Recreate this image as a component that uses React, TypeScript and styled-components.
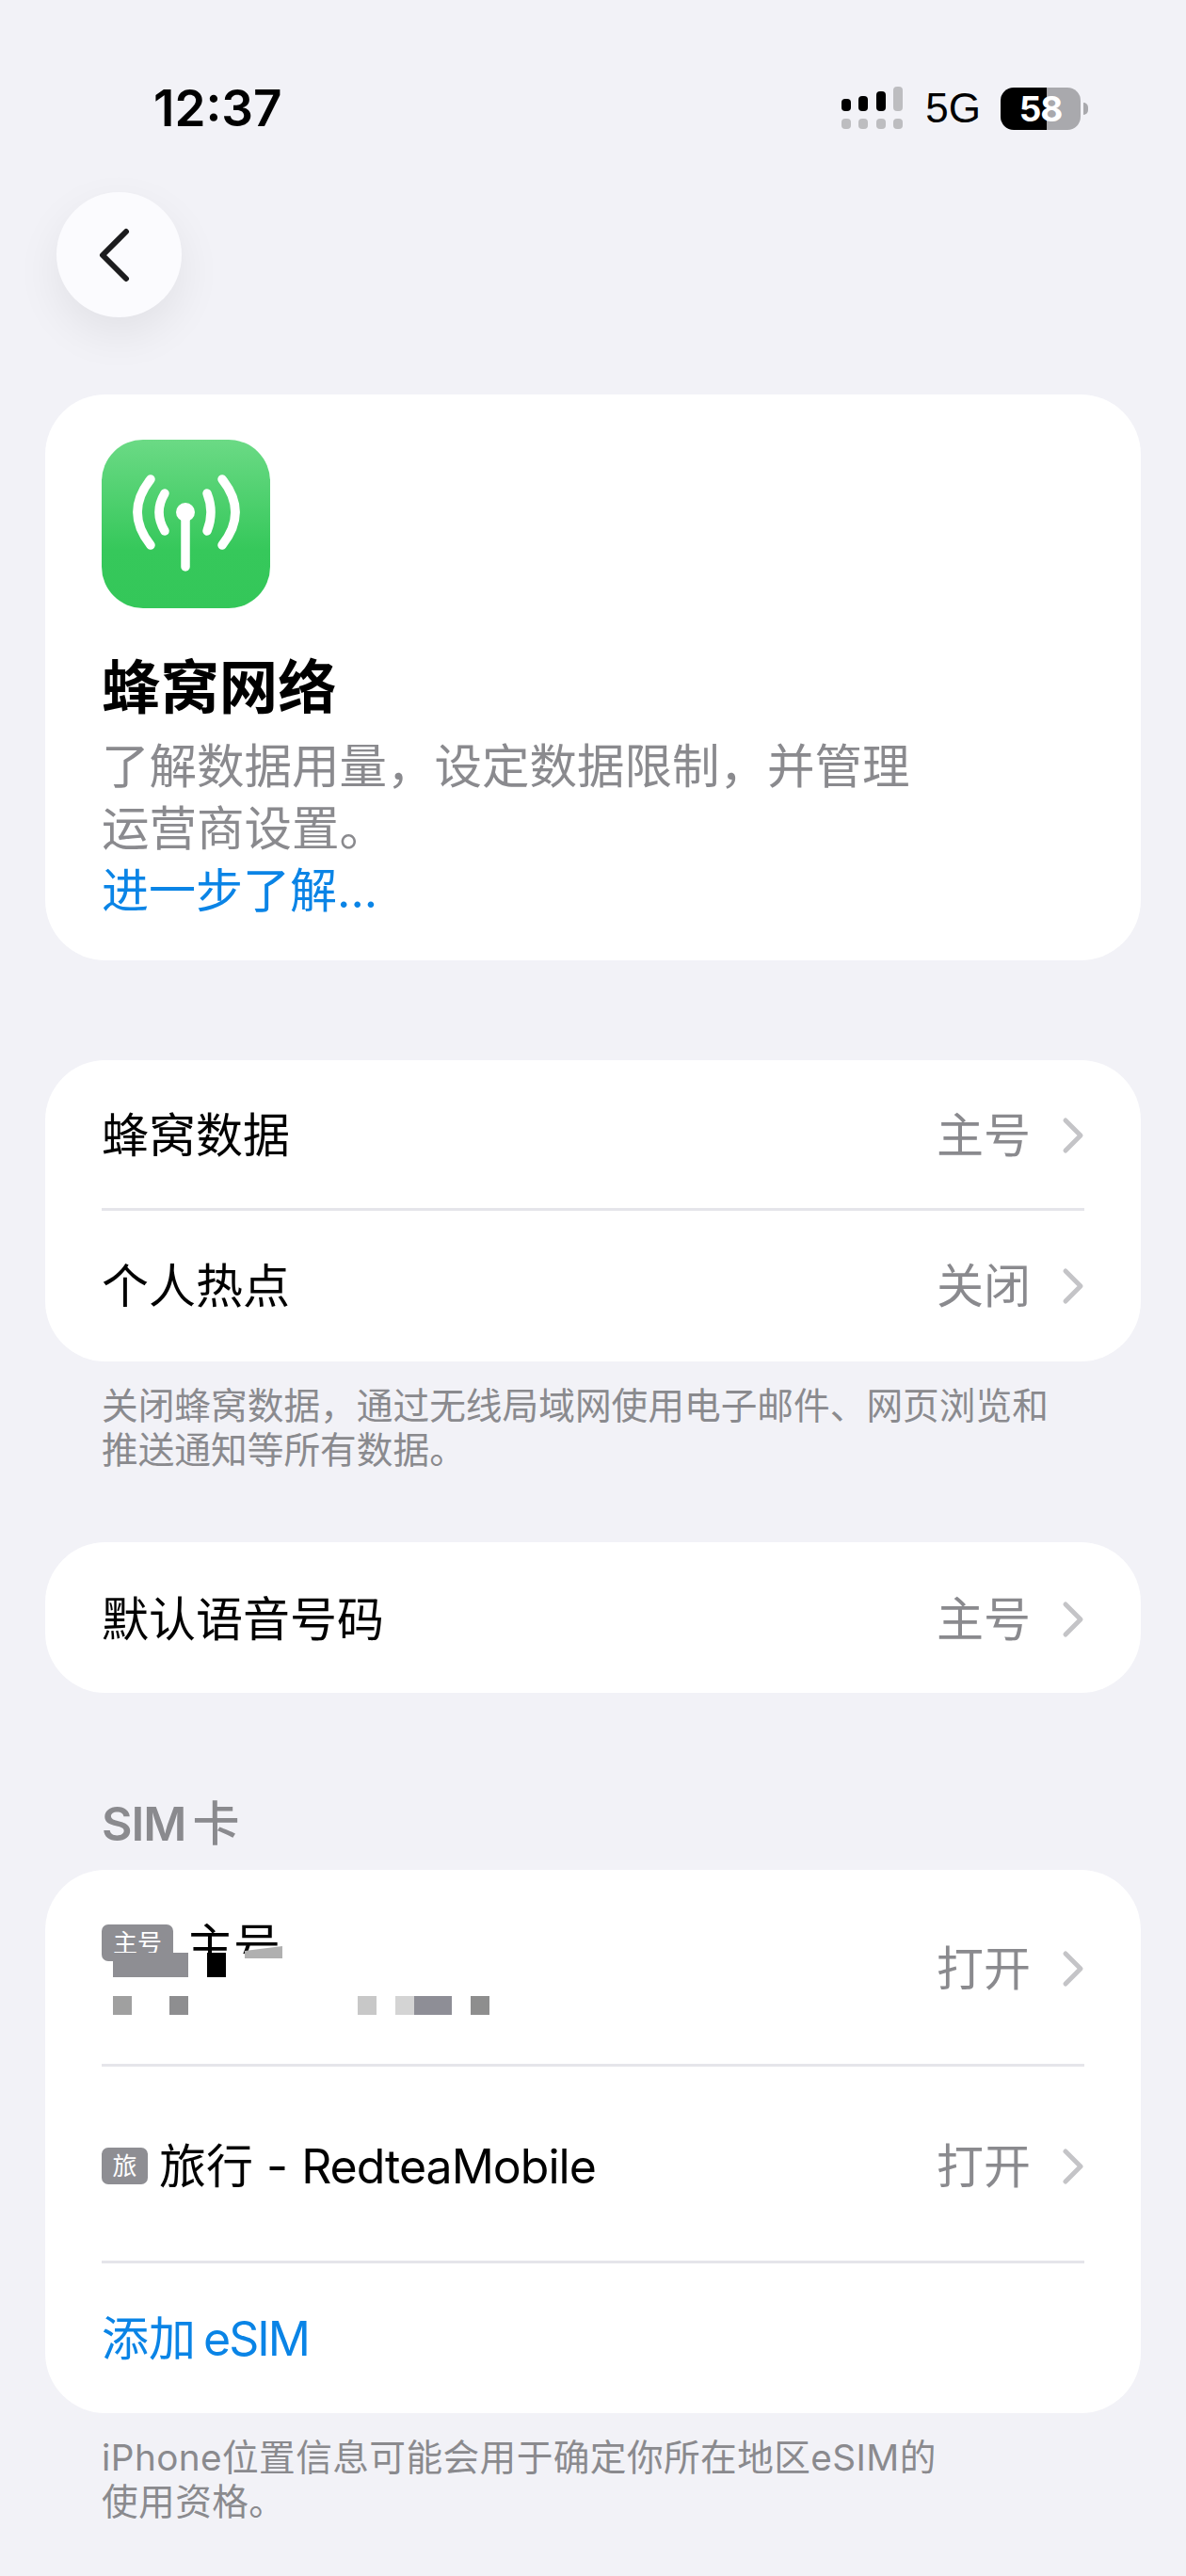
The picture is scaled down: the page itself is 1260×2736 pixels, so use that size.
import React from "react";
import styled, { createGlobalStyle } from "styled-components";

const FONT = `Inter, "Noto Sans CJK SC", "Noto Sans", sans-serif`;

const Global = createGlobalStyle`
  html, body { margin: 0; padding: 0; background: #f2f2f7; }
  body { font-family: ${FONT}; }
`;

const Page = styled.div`
  position: relative;
  width: 1260px;
  height: 2736px;
  overflow: hidden;
  background: #f2f2f7;
  padding: 0 48px;
  box-sizing: border-box;
`;

const StatusBar = styled.div`
  display: flex;
  align-items: center;
  justify-content: space-between;
  height: 46px;
  margin: 92px 0 0;
  padding: 0 64px 0 115px;
`;

const Time = styled.span`
  font-size: 53px;
  font-weight: 600;
  line-height: 46px;
  color: #000;
`;

const StatusRight = styled.div`
  display: flex;
  align-items: center;
`;

const NetLabel = styled.span`
  font-family: "Liberation Sans", sans-serif;
  font-size: 44px;
  line-height: 46px;
  margin: 0 21px 0 24px;
  color: #000;
`;

const Battery = styled.div`
  position: relative;
  width: 85px;
  height: 45px;
  border-radius: 14px;
  background: linear-gradient(90deg, #000 0 49px, #a9a9ad 49px 100%);
  display: flex;
  align-items: center;
  justify-content: center;
  font-size: 37px;
  font-weight: 700;
  letter-spacing: -1px;
  color: #fff;
  &::after {
    content: "";
    position: absolute;
    right: -8px;
    top: 16px;
    width: 5px;
    height: 13px;
    border-radius: 0 6px 6px 0;
    background: #a9a9ad;
  }
`;

const BackButton = styled.div`
  width: 133px;
  height: 133px;
  margin: 66px 0 0 12px;
  border-radius: 50%;
  background: #fbfbfe;
  box-shadow: 0 18px 48px rgba(0, 0, 0, 0.07);
  display: flex;
  align-items: center;
  justify-content: center;
`;

const BackGlyph = styled.svg`
  margin-right: 12px;
`;

const Card = styled.div<{ $top: number }>`
  margin-top: ${(p) => p.$top}px;
  background: #fff;
  border-radius: 64px;
  overflow: hidden;
`;

const HeroCard = styled(Card)`
  padding: 48px 60px 0;
  height: 601px;
  box-sizing: border-box;
`;

const AppIcon = styled.svg`
  display: block;
  width: 179px;
  height: 179px;
`;

const HeroTitle = styled.h1`
  margin: 48px 0 0;
  font-size: 62.4px;
  line-height: 74px;
  font-weight: 700;
  color: #000;
`;

const HeroText = styled.p`
  margin: 13px 0 0;
  width: 880px;
  font-size: 50.5px;
  line-height: 66px;
  color: #8a8a8e;
`;

const LinkText = styled.div`
  font-size: 50px;
  line-height: 66px;
  color: #0a84e6;
`;

const Row = styled.div<{ $height: number; $shift?: number }>`
  position: relative;
  display: flex;
  align-items: center;
  justify-content: space-between;
  box-sizing: border-box;
  height: ${(p) => p.$height}px;
  margin: 0 60px;
  padding-top: ${(p) => p.$shift ?? 0}px;
  border-top: 3px solid transparent;
  font-size: 50px;
  color: #000;
  & + & {
    border-top-color: #e5e5ea;
  }
`;

const RowLabel = styled.span`
  display: flex;
  align-items: center;
  line-height: 60px;
  white-space: pre;
`;

const Latin = styled.span<{ $tight?: boolean }>`
  letter-spacing: ${(p) => (p.$tight ? -2 : -1)}px;
`;

const Gap = styled.span<{ $w: number }>`
  display: inline-block;
  width: ${(p) => p.$w}px;
`;

const RowValue = styled.span`
  display: flex;
  align-items: center;
  gap: 33px;
  color: #8a8a8e;
  line-height: 60px;
`;

const Footnote = styled.p<{ $spacing?: number }>`
  margin: 24px 0 0;
  padding: 0 60px;
  font-size: 38.7px;
  line-height: 47px;
  letter-spacing: ${(p) => p.$spacing ?? 0}px;
  color: #8a8a8e;
`;

const SectionHead = styled.div`
  margin: 109px 0 0;
  padding: 0 60px;
  font-size: 50px;
  line-height: 60px;
  font-weight: 600;
  color: #8a8a8e;
`;

const SectionChar = styled.span`
  font-weight: 500;
`;

const SimTag = styled.span<{ $wide?: boolean }>`
  display: inline-flex;
  align-items: center;
  justify-content: center;
  flex: none;
  width: ${(p) => (p.$wide ? 76 : 49)}px;
  height: 39px;
  margin: ${(p) => (p.$wide ? "1px 14px 0 0" : "0 12px 0 0")};
  border-radius: 7px;
  background: #8e8e93;
  color: #fff;
  font-size: 26px;
  line-height: 39px;
`;

const ClippedName = styled.div`
  display: flex;
  align-items: flex-start;
  height: 96px;
`;

const ClippedChars = styled.span`
  display: block;
  height: 32px;
  overflow: hidden;
  line-height: 60px;
  & > span {
    display: block;
    margin-top: -6px;
  }
`;

const Mosaic = styled.div<{ $x: number; $y: number; $w: number; $h: number; $c: string; $slant?: boolean }>`
  position: absolute;
  left: ${(p) => p.$x}px;
  top: ${(p) => p.$y}px;
  width: ${(p) => p.$w}px;
  height: ${(p) => p.$h}px;
  background: ${(p) => p.$c};
  ${(p) => (p.$slant ? "clip-path: polygon(0 38%, 100% 0, 100% 100%, 0 100%);" : "")}
`;

const Chevron = () => (
  <svg width="24" height="40" viewBox="0 0 24 40" fill="none">
    <path d="M4 4 L20 20 L4 36" stroke="#c4c4c7" strokeWidth="5" strokeLinecap="round" strokeLinejoin="round" />
  </svg>
);

const blocks: [number, number, number, number, string, boolean?][] = [
  [120, 2074, 80, 26, "#8e8e93"],
  [220, 2074, 20, 26, "#000"],
  [260, 2067, 40, 13, "#b0b0b0", true],
  [120, 2120, 20, 20, "#a0a0a0"],
  [180, 2120, 20, 20, "#8e8e90"],
  [380, 2120, 20, 20, "#c8c8c8"],
  [420, 2120, 20, 20, "#d4d4d4"],
  [440, 2120, 40, 20, "#8e8e96"],
  [500, 2120, 20, 20, "#8e8e8e"],
];

export default function App() {
  return (
    <Page>
      <Global />
      <StatusBar>
        <Time>12:37</Time>
        <StatusRight>
          <svg width="66" height="46" viewBox="0 0 66 46">
            <rect x="1" y="13" width="10" height="13" rx="4" fill="#000" />
            <rect x="19" y="10" width="10" height="16" rx="4" fill="#000" />
            <rect x="38" y="5" width="10" height="21" rx="4" fill="#000" />
            <rect x="56" y="0" width="10" height="26" rx="4" fill="#bdbdc0" />
            <rect x="1" y="34" width="10" height="11" rx="4" fill="#bdbdc0" />
            <rect x="19" y="34" width="10" height="11" rx="4" fill="#bdbdc0" />
            <rect x="38" y="34" width="10" height="11" rx="4" fill="#bdbdc0" />
            <rect x="56" y="34" width="10" height="11" rx="4" fill="#bdbdc0" />
          </svg>
          <NetLabel>5G</NetLabel>
          <Battery>58</Battery>
        </StatusRight>
      </StatusBar>
      <BackButton>
        <BackGlyph width="40" height="62" viewBox="0 0 40 62" fill="none">
          <path d="M33 6 L8 31 L33 56" stroke="#1c1c1e" strokeWidth="6" strokeLinecap="round" strokeLinejoin="round" />
        </BackGlyph>
      </BackButton>

      <HeroCard $top={82}>
        <AppIcon viewBox="0 0 179 179">
          <defs>
            <linearGradient id="g" x1="0" y1="0" x2="0" y2="1">
              <stop offset="0" stopColor="#6bda85" />
              <stop offset="0.65" stopColor="#36c85b" />
              <stop offset="1" stopColor="#34c759" />
            </linearGradient>
          </defs>
          <rect width="179" height="179" rx="44" fill="url(#g)" />
          <g fill="none" stroke="#fff" strokeWidth="9.5" strokeLinecap="round">
            <path d="M52 42 Q24 77 52 112" />
            <path d="M67 57 Q55 77 67 97" />
            <path d="M128 42 Q156 77 128 112" />
            <path d="M112 57 Q120 77 112 97" />
            <path d="M89 77 L89 135" />
          </g>
          <circle cx="89" cy="77" r="10" fill="#fff" />
        </AppIcon>
        <HeroTitle>蜂窝网络</HeroTitle>
        <HeroText>了解数据用量，设定数据限制，并管理运营商设置。</HeroText>
        <LinkText>进一步了解...</LinkText>
      </HeroCard>

      <Card $top={106}>
        <Row $height={157}>
          <RowLabel>蜂窝数据</RowLabel>
          <RowValue>主号<Chevron /></RowValue>
        </Row>
        <Row $height={163}>
          <RowLabel>个人热点</RowLabel>
          <RowValue>关闭<Chevron /></RowValue>
        </Row>
      </Card>
      <Footnote>关闭蜂窝数据，通过无线局域网使用电子邮件、网页浏览和<br />推送通知等所有数据。</Footnote>

      <Card $top={74}>
        <Row $height={160}>
          <RowLabel>默认语音号码</RowLabel>
          <RowValue>主号<Chevron /></RowValue>
        </Row>
      </Card>

      <SectionHead><Latin>SIM</Latin><Gap $w={7} /><SectionChar>卡</SectionChar></SectionHead>
      <Card $top={19}>
        <Row $height={206}>
          <ClippedName>
            <SimTag $wide>主号</SimTag>
            <ClippedChars><span>主号</span></ClippedChars>
          </ClippedName>
          <RowValue>打开<Chevron /></RowValue>
        </Row>
        <Row $height={209} $shift={5}>
          <RowLabel><SimTag>旅</SimTag>旅行 - <Latin>RedteaMobile</Latin></RowLabel>
          <RowValue>打开<Chevron /></RowValue>
        </Row>
        <Row $height={162}>
          <RowLabel><LinkText>添加<Gap $w={8} /><Latin $tight>eSIM</Latin></LinkText></RowLabel>
        </Row>
      </Card>
      <Footnote $spacing={0.4}>iPhone位置信息可能会用于确定你所在地区eSIM的<br />使用资格。</Footnote>

      {blocks.map(([x, y, w, h, c, slant], i) => (
        <Mosaic key={i} $x={x} $y={y} $w={w} $h={h} $c={c} $slant={slant} />
      ))}
    </Page>
  );
}
